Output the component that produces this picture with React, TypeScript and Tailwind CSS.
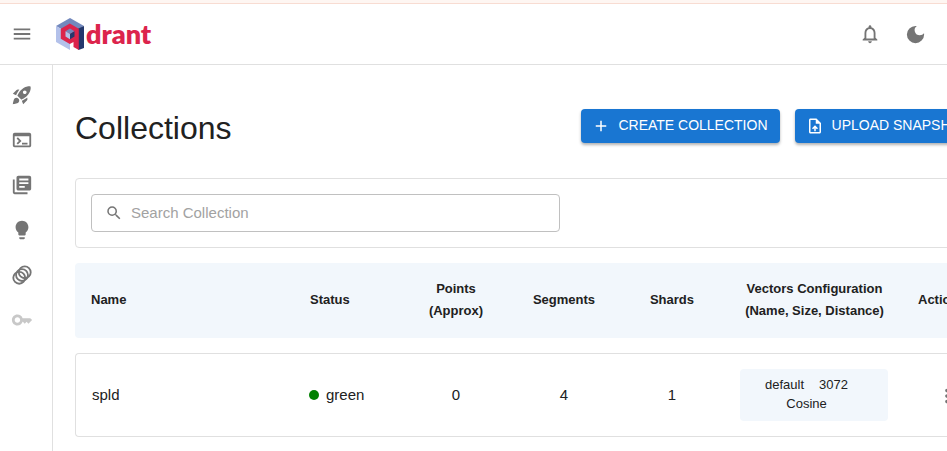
import type { ReactNode } from "react";
import {
  MdAdd,
  MdDarkMode,
  MdKey,
  MdLibraryBooks,
  MdMenu,
  MdMoreVert,
  MdNotificationsNone,
  MdRocketLaunch,
  MdSearch,
  MdTerminal,
  MdUploadFile,
} from "react-icons/md";

const collections = [
  {
    name: "spld",
    status: "green",
    points: 0,
    segments: 4,
    shards: 1,
    vector: ["default", "3072", "Cosine"],
  },
];

function Logo() {
  return (
    <a href="#" aria-label="Qdrant" className="flex items-center gap-[2px]">
      <svg viewBox="0 0 28 32" className="h-8 w-7">
        <path d="M14 0L28 8L14 16L0 8Z" fill="#7389bd" />
        <path d="M0 8L14 16V32L0 24Z" fill="#b3c1ea" />
        <path d="M28 8V30L22.500 32L20 28V11.500Z" fill="#24386c" />
        <path
          d="M13.800 5.500L22.800 10.800V32L17.500 29V24L13.800 26L4.800 20.800V10.800Z"
          fill="#dc244c"
        />
        <path d="M14 10.500L18.500 13.200L14 16L9.500 13.200Z" fill="#7389bd" />
        <path d="M9.500 13.200L14 16V21.200L9.500 18.500Z" fill="#b3c1ea" />
        <path d="M18.500 13.200V18.500L14 21.200V16Z" fill="#24386c" />
      </svg>
      <span className="font-['Lato'] text-[27px] leading-8 font-extrabold text-[#dc244c]">
        drant
      </span>
    </a>
  );
}

function BulbIcon() {
  return (
    <svg viewBox="0 0 24 24" fill="currentColor" className="size-[22px]">
      <path d="M9 21c0 .5.4 1 1 1h4c.6 0 1-.5 1-1v-1H9zm3-19C8.100 2 5 5.100 5 9c0 2.400 1.200 4.500 3 5.700V17c0 .5.4 1 1 1h6c.6 0 1-.5 1-1v-2.300c1.800-1.300 3-3.400 3-5.700 0-3.900-3.100-7-7-7" />
    </svg>
  );
}

function RingsIcon() {
  return (
    <svg
      viewBox="0 0 24 24"
      fill="none"
      stroke="currentColor"
      strokeWidth="2"
      className="size-[22px]"
    >
      <circle cx="9" cy="15" r="6.500" />
      <circle cx="12" cy="12" r="6.500" />
      <circle cx="15" cy="9" r="6.500" />
    </svg>
  );
}

function SideLink({
  label,
  muted,
  children,
}: {
  label: string;
  muted?: boolean;
  children: ReactNode;
}) {
  return (
    <a
      href="#"
      aria-label={label}
      className={
        muted
          ? "flex h-[45px] items-center pl-[11px] text-[#c8c8c8]"
          : "flex h-[45px] items-center pl-[11px] text-[#757575]"
      }
    >
      {children}
    </a>
  );
}

function ActionButton({ icon, label }: { icon: ReactNode; label: string }) {
  return (
    <button className="flex h-[34px] items-center gap-2 rounded-[4px] bg-[#1976d2] pr-3 pl-[11px] text-[14px] whitespace-nowrap text-white shadow-[0_2px_3px_rgba(0,0,0,0.3)]">
      {icon}
      <span className="pb-0.5">{label}</span>
    </button>
  );
}

export default function App() {
  return (
    <div className="flex min-h-screen flex-col overflow-hidden bg-white font-['Liberation_Sans',Arial,sans-serif] text-[#212121]">
      <div className="h-1 border-b border-[#f8dcd2] bg-[#fef6f2]" />
      <header className="flex h-[61px] items-center border-b border-[#e0e0e0] pr-5 pl-[11px] text-[#757575]">
        <button aria-label="Menu" className="mr-[23px]">
          <MdMenu className="size-[22px]" />
        </button>
        <Logo />
        <button aria-label="Notifications" className="mr-[23px] ml-auto">
          <MdNotificationsNone className="size-[22px]" />
        </button>
        <button aria-label="Dark mode">
          <MdDarkMode className="size-[23px]" />
        </button>
      </header>

      <div className="flex flex-1">
        <nav className="w-[53px] shrink-0 border-r border-[#e0e0e0] pt-[7px]">
          <SideLink label="Welcome">
            <MdRocketLaunch className="size-[22px]" />
          </SideLink>
          <SideLink label="Console">
            <MdTerminal className="size-[22px]" />
          </SideLink>
          <SideLink label="Collections">
            <MdLibraryBooks className="size-[22px]" />
          </SideLink>
          <SideLink label="Tutorial">
            <BulbIcon />
          </SideLink>
          <SideLink label="Datasets">
            <RingsIcon />
          </SideLink>
          <SideLink label="Access tokens" muted>
            <MdKey className="size-[22px]" />
          </SideLink>
        </nav>

        <main className="min-w-[951px] flex-1 px-[22px] pt-11">
          <div className="flex items-start justify-between">
            <h1 className="text-[32px] leading-[38px]">Collections</h1>
            <div className="flex gap-[15px]">
              <ActionButton
                icon={<MdAdd className="size-[18px]" />}
                label="CREATE COLLECTION"
              />
              <ActionButton
                icon={<MdUploadFile className="size-[18px]" />}
                label="UPLOAD SNAPSHOT"
              />
            </div>
          </div>

          <div className="mt-[31px] rounded-[4px] border border-[#e0e0e0] p-[15px]">
            <label className="flex h-[38px] w-[469px] items-center gap-2 rounded-[4px] border border-[#c0c0c0] px-[13px]">
              <MdSearch className="size-[18px] text-[#757575]" />
              <input
                type="text"
                aria-label="Search Collection"
                placeholder="Search Collection"
                className="min-w-0 flex-1 text-[15px] outline-none placeholder:text-[#a2a2a2]"
              />
            </label>
          </div>

          <table className="w-full table-fixed border-separate border-spacing-x-0 border-spacing-y-[15px]">
            <colgroup>
              <col />
              <col className="w-[108px]" />
              <col className="w-[108px]" />
              <col className="w-[108px]" />
              <col className="w-[108px]" />
              <col className="w-[177px]" />
              <col className="w-[79px]" />
            </colgroup>
            <thead>
              <tr className="h-[75px] text-[13px] leading-[22px] [&>th]:bg-[#f2f7fc] [&>th]:pb-0.5">
                <th className="rounded-l-[4px] px-4 text-left">Name</th>
                <th className="px-4 text-left">Status</th>
                <th>
                  Points
                  <br />
                  (Approx)
                </th>
                <th>Segments</th>
                <th>Shards</th>
                <th>
                  Vectors Configuration
                  <br />
                  (Name, Size, Distance)
                </th>
                <th className="rounded-r-[4px] px-[15px] text-left">Actions</th>
              </tr>
            </thead>
            <tbody>
              {collections.map((item) => (
                <tr
                  key={item.name}
                  className="h-[84px] text-center text-[15px] [&>td]:border-y [&>td]:border-[#e0e0e0]"
                >
                  <td className="rounded-l-[4px] border-l px-4 text-left">
                    {item.name}
                  </td>
                  <td className="px-[15px]">
                    <div className="flex items-center gap-[7px]">
                      <span className="size-[10px] rounded-full bg-[#008000]" />
                      {item.status}
                    </div>
                  </td>
                  <td>{item.points}</td>
                  <td>{item.segments}</td>
                  <td>{item.shards}</td>
                  <td className="pr-[15px] pl-3.5">
                    <div className="rounded-[4px] bg-[#f2f7fc] px-4 pt-1.5 pb-2 text-[13px] leading-[19px]">
                      {item.vector.map((part) => (
                        <span key={part} className="mr-[15px] inline-block">
                          {part}
                        </span>
                      ))}
                    </div>
                  </td>
                  <td className="rounded-r-[4px] border-r pr-[23px] text-right">
                    <button aria-label="Actions" className="align-middle">
                      <MdMoreVert className="size-[22px] text-[#757575]" />
                    </button>
                  </td>
                </tr>
              ))}
            </tbody>
          </table>
        </main>
      </div>
    </div>
  );
}
